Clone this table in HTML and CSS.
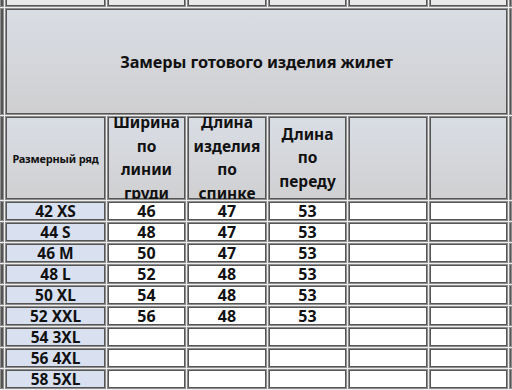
FILE: index.html
```html
<!DOCTYPE html>
<html lang="ru">
<head>
<meta charset="utf-8">
<title>Замеры готового изделия жилет</title>
<link rel="stylesheet" href="styles.css">
</head>
<body>
<div class="sheet">
  <div class="c top"></div><div class="c top"></div><div class="c top"></div><div class="c top"></div><div class="c top"></div><div class="c top"></div><div class="c top"></div><div class="c top"></div>

  <div class="c edge hd"></div>
  <div class="c title">Замеры готового изделия жилет</div>
  <div class="c edge hd"></div>

  <div class="c edge hd"></div>
  <div class="c hd small">Размерный ряд</div>
  <div class="c hd big">Ширина по линии груди</div>
  <div class="c hd big">Длина изделия по спинке</div>
  <div class="c hd big">Длина по переду</div>
  <div class="c hd"></div>
  <div class="c hd"></div>
  <div class="c edge hd"></div>

  <div class="c edge"></div><div class="c size">42 XS</div><div class="c val">46</div><div class="c val">47</div><div class="c val">53</div><div class="c val"></div><div class="c val"></div><div class="c edge"></div>
  <div class="c edge"></div><div class="c size">44 S</div><div class="c val">48</div><div class="c val">47</div><div class="c val">53</div><div class="c val"></div><div class="c val"></div><div class="c edge"></div>
  <div class="c edge"></div><div class="c size">46 M</div><div class="c val">50</div><div class="c val">47</div><div class="c val">53</div><div class="c val"></div><div class="c val"></div><div class="c edge"></div>
  <div class="c edge"></div><div class="c size">48 L</div><div class="c val">52</div><div class="c val">48</div><div class="c val">53</div><div class="c val"></div><div class="c val"></div><div class="c edge"></div>
  <div class="c edge"></div><div class="c size">50 XL</div><div class="c val">54</div><div class="c val">48</div><div class="c val">53</div><div class="c val"></div><div class="c val"></div><div class="c edge"></div>
  <div class="c edge"></div><div class="c size">52 XXL</div><div class="c val">56</div><div class="c val">48</div><div class="c val">53</div><div class="c val"></div><div class="c val"></div><div class="c edge"></div>
  <div class="c edge"></div><div class="c size">54 3XL</div><div class="c val"></div><div class="c val"></div><div class="c val"></div><div class="c val"></div><div class="c val"></div><div class="c edge"></div>
  <div class="c edge"></div><div class="c size">56 4XL</div><div class="c val"></div><div class="c val"></div><div class="c val"></div><div class="c val"></div><div class="c val"></div><div class="c edge"></div>
  <div class="c edge"></div><div class="c size">58 5XL</div><div class="c val"></div><div class="c val"></div><div class="c val"></div><div class="c val"></div><div class="c val"></div><div class="c edge"></div>
</div>
</body>
</html>
```

FILE: styles.css
```css
html, body {
  margin: 0;
  padding: 0;
  background: #ececec;
  overflow: hidden;
}

.sheet {
  width: 512px;
  height: 390px;
  overflow: hidden;
  display: grid;
  grid-template-columns: 4px 101px 79px 80px 79px 80px 79px 1fr;
  grid-template-rows: 7px 107px 84px repeat(9, 20px);
  gap: 1px;
  background: #ededed;
  font-family: "Noto Sans", "Open Sans", sans-serif;
  font-weight: 700;
  color: #111;
}

.c {
  box-sizing: border-box;
  border: 1px solid #8e8e8e;
  box-shadow: inset 0 0 0 1px #555;
  display: flex;
  align-items: center;
  justify-content: center;
  text-align: center;
  overflow: hidden;
  background: #fff;
}

.top {
  background: #e9e9e9;
  border-top: none;
  box-shadow: inset 0 -1px 0 #555, inset 1px 0 0 #555, inset -1px 0 0 #555;
}

.edge {
  background: #e4e4e4;
}

.hd {
  background: linear-gradient(#d9dde4, #d0d0d2);
}

.title {
  grid-column: 2 / span 6;
  background: linear-gradient(#d9dde4, #cfcfd1);
  font-size: 16.3px;
  letter-spacing: -0.1px;
}

.small {
  font-size: 11px;
  letter-spacing: -0.2px;
}

.big {
  font-size: 15.5px;
  line-height: 23.5px;
  padding: 0 4px;
}

.size {
  background: #d9e1f1;
  font-size: 15.5px;
}

.val {
  font-size: 16px;
}
```
